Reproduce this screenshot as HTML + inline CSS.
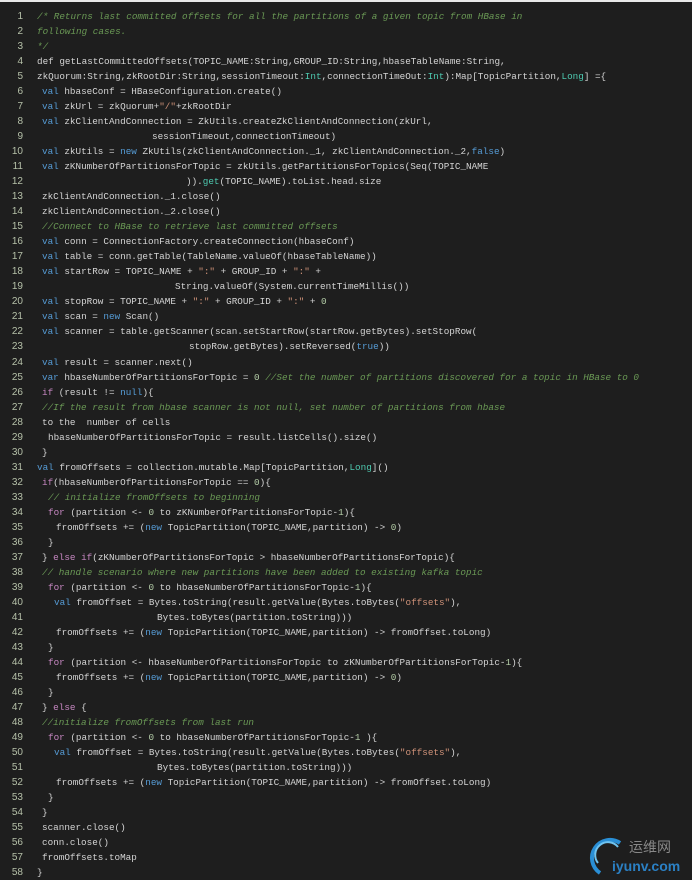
<!DOCTYPE html>
<html><head><meta charset="utf-8"><style>
html,body{margin:0;padding:0;}
body{width:692px;height:880px;background:#1e1e1e;overflow:hidden;position:relative;border-top:2px solid #e8e8e8;box-sizing:border-box;}
.l{position:absolute;left:0;height:15px;line-height:15px;white-space:pre;font-family:"Liberation Mono",monospace;font-size:9.3px;color:#d4d4d4;}
.n{position:absolute;left:0;width:23px;text-align:right;color:#b5c0a8;font-family:"Liberation Sans",sans-serif;font-size:10px;}
.c{position:absolute;}
.k{color:#569cd6}.m{color:#6a9955;font-style:italic}.s{color:#ce9178}.t{color:#4ec9b0}.p{color:#c586c0}.d{color:#b5cea8}
.logo{position:absolute;left:588px;top:833px;}
</style></head><body>
<div id="code"></div>
<script>
var L=[
[37,'<span class="m">/* Returns last committed offsets for all the partitions of a given topic from HBase in</span>'],
[37,'<span class="m">following cases.</span>'],
[37,'<span class="m">*/</span>'],
[37,'def getLastCommittedOffsets(TOPIC_NAME:String,GROUP_ID:String,hbaseTableName:String,'],
[37,'zkQuorum:String,zkRootDir:String,sessionTimeout:<span class="t">Int</span>,connectionTimeOut:<span class="t">Int</span>):Map[TopicPartition,<span class="t">Long</span>] ={'],
[42,'<span class="k">val</span> hbaseConf = HBaseConfiguration.create()'],
[42,'<span class="k">val</span> zkUrl = zkQuorum+<span class="s">"/"</span>+zkRootDir'],
[42,'<span class="k">val</span> zkClientAndConnection = ZkUtils.createZkClientAndConnection(zkUrl,'],
[152,'sessionTimeout,connectionTimeout)'],
[42,'<span class="k">val</span> zkUtils = <span class="k">new</span> ZkUtils(zkClientAndConnection._1, zkClientAndConnection._2,<span class="k">false</span>)'],
[42,'<span class="k">val</span> zKNumberOfPartitionsForTopic = zkUtils.getPartitionsForTopics(Seq(TOPIC_NAME'],
[186,')).<span class="t">get</span>(TOPIC_NAME).toList.head.size'],
[42,'zkClientAndConnection._1.close()'],
[42,'zkClientAndConnection._2.close()'],
[42,'<span class="m">//Connect to HBase to retrieve last committed offsets</span>'],
[42,'<span class="k">val</span> conn = ConnectionFactory.createConnection(hbaseConf)'],
[42,'<span class="k">val</span> table = conn.getTable(TableName.valueOf(hbaseTableName))'],
[42,'<span class="k">val</span> startRow = TOPIC_NAME + <span class="s">":"</span> + GROUP_ID + <span class="s">":"</span> +'],
[175,'String.valueOf(System.currentTimeMillis())'],
[42,'<span class="k">val</span> stopRow = TOPIC_NAME + <span class="s">":"</span> + GROUP_ID + <span class="s">":"</span> + <span class="d">0</span>'],
[42,'<span class="k">val</span> scan = <span class="k">new</span> Scan()'],
[42,'<span class="k">val</span> scanner = table.getScanner(scan.setStartRow(startRow.getBytes).setStopRow('],
[189,'stopRow.getBytes).setReversed(<span class="k">true</span>))'],
[42,'<span class="k">val</span> result = scanner.next()'],
[42,'<span class="k">var</span> hbaseNumberOfPartitionsForTopic = <span class="d">0</span> <span class="m">//Set the number of partitions discovered for a topic in HBase to 0</span>'],
[42,'<span class="p">if</span> (result != <span class="k">null</span>){'],
[42,'<span class="m">//If the result from hbase scanner is not null, set number of partitions from hbase</span>'],
[42,'to the  number of cells'],
[48,'hbaseNumberOfPartitionsForTopic = result.listCells().size()'],
[42,'}'],
[37,'<span class="k">val</span> fromOffsets = collection.mutable.Map[TopicPartition,<span class="t">Long</span>]()'],
[42,'<span class="p">if</span>(hbaseNumberOfPartitionsForTopic == <span class="d">0</span>){'],
[48,'<span class="m">// initialize fromOffsets to beginning</span>'],
[48,'<span class="p">for</span> (partition &lt;- <span class="d">0</span> to zKNumberOfPartitionsForTopic-<span class="d">1</span>){'],
[56,'fromOffsets += (<span class="k">new</span> TopicPartition(TOPIC_NAME,partition) -&gt; <span class="d">0</span>)'],
[48,'}'],
[42,'} <span class="p">else if</span>(zKNumberOfPartitionsForTopic &gt; hbaseNumberOfPartitionsForTopic){'],
[42,'<span class="m">// handle scenario where new partitions have been added to existing kafka topic</span>'],
[48,'<span class="p">for</span> (partition &lt;- <span class="d">0</span> to hbaseNumberOfPartitionsForTopic-<span class="d">1</span>){'],
[54,'<span class="k">val</span> fromOffset = Bytes.toString(result.getValue(Bytes.toBytes(<span class="s">"offsets"</span>),'],
[157,'Bytes.toBytes(partition.toString)))'],
[56,'fromOffsets += (<span class="k">new</span> TopicPartition(TOPIC_NAME,partition) -&gt; fromOffset.toLong)'],
[48,'}'],
[48,'<span class="p">for</span> (partition &lt;- hbaseNumberOfPartitionsForTopic to zKNumberOfPartitionsForTopic-<span class="d">1</span>){'],
[56,'fromOffsets += (<span class="k">new</span> TopicPartition(TOPIC_NAME,partition) -&gt; <span class="d">0</span>)'],
[48,'}'],
[42,'} <span class="p">else</span> {'],
[42,'<span class="m">//initialize fromOffsets from last run</span>'],
[48,'<span class="p">for</span> (partition &lt;- <span class="d">0</span> to hbaseNumberOfPartitionsForTopic-<span class="d">1</span> ){'],
[54,'<span class="k">val</span> fromOffset = Bytes.toString(result.getValue(Bytes.toBytes(<span class="s">"offsets"</span>),'],
[157,'Bytes.toBytes(partition.toString)))'],
[56,'fromOffsets += (<span class="k">new</span> TopicPartition(TOPIC_NAME,partition) -&gt; fromOffset.toLong)'],
[48,'}'],
[42,'}'],
[42,'scanner.close()'],
[42,'conn.close()'],
[42,'fromOffsets.toMap'],
[37,'}']
];
var h='';
for(var i=0;i<L.length;i++){var y=7+i*15.02;
h+='<div class="l" style="top:'+y.toFixed(1)+'px"><span class="n">'+(i+1)+'</span><span class="c" style="left:'+L[i][0]+'px">'+L[i][1]+'</span></div>';}
document.getElementById('code').innerHTML=h;
</script>
<div class="logo">
<svg width="40" height="42" viewBox="0 0 40 42" style="position:absolute;left:0;top:0"><path d="M32 8 A16 16 0 1 0 12 38" fill="none" stroke="#2a8fd6" stroke-width="4"/><path d="M30 12 A11 11 0 0 0 10 28" fill="none" stroke="#6fc3f0" stroke-width="2"/></svg>
<div style="position:absolute;left:41px;top:2px;color:#888;font:14px 'Noto Sans CJK SC',sans-serif;white-space:nowrap">运维网</div>
<div style="position:absolute;left:24px;top:23px;color:#2b80c4;font:bold 14px 'Liberation Sans',sans-serif;white-space:nowrap">iyunv.com</div>
</div>
</body></html>
